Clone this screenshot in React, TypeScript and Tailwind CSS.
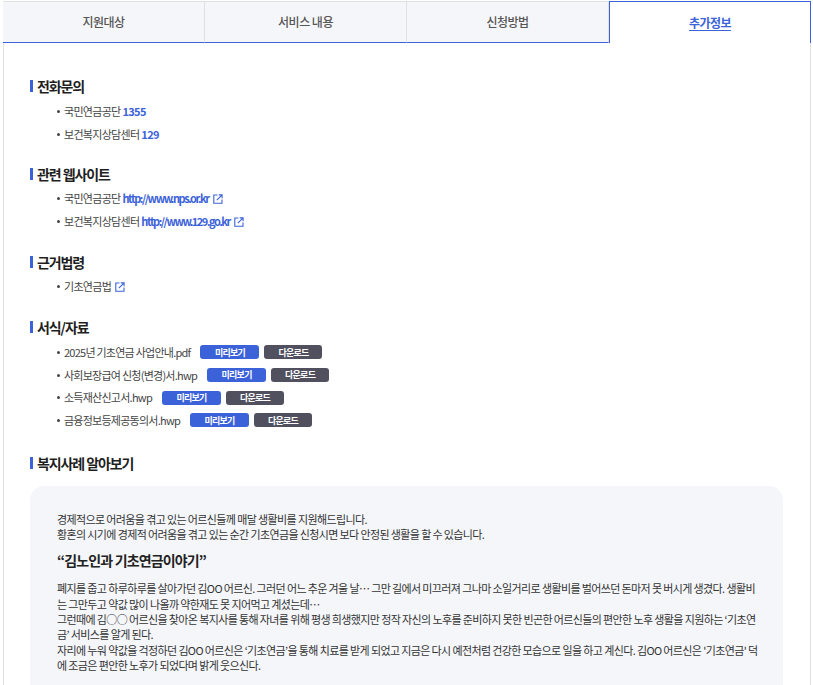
const fontStack = { fontFamily: '"Noto Sans CJK KR", "Noto Sans", sans-serif' };

const tabs = ["지원대상", "서비스 내용", "신청방법"];

const files = [
  "2025년 기초연금 사업안내.pdf",
  "사회보장급여 신청(변경)서.hwp",
  "소득재산신고서.hwp",
  "금융정보등제공동의서.hwp",
];

function Heading({ children }: { children: React.ReactNode }) {
  return (
    <h3 className="flex items-center h-[20px] text-[14px] font-bold leading-[20px] tracking-[-1.1px] text-[#1f1f1f]">
      <span className="w-[3px] h-[12px] bg-[#3b62d9] mr-[4px]" />
      {children}
    </h3>
  );
}

function Bullet({ children, className = "h-[23px] tracking-[-0.7px]" }: { children: React.ReactNode; className?: string }) {
  return (
    <li className={`flex items-center pl-[27px] text-[11px] text-[#444] ${className}`}>
      <span className="w-[3px] h-[3px] rounded-full bg-[#444] mr-[4px]" />
      {children}
    </li>
  );
}

function Blue({ children, narrow }: { children: React.ReactNode; narrow?: boolean }) {
  return (
    <span className={narrow ? "ml-[2px] font-bold tracking-[-1.45px] text-[#3b62d9]" : "ml-[2px] font-bold text-[#3b62d9]"}>
      {children}
    </span>
  );
}

function Ext() {
  return (
    <svg viewBox="0 0 10 10" className="ml-[4px] w-[10px] h-[10px] text-[#3b62d9]" fill="none" stroke="currentColor" strokeWidth="1.1">
      <path d="M4.5 1H.8v8.2H9V5.6" />
      <path d="M3.8 6.2 8.6 1.4M5.8 .9h3.3v3.3" />
    </svg>
  );
}

export default function App() {
  return (
    <div className="h-[685px] overflow-hidden bg-white pt-[1px] pl-[3px] pr-[2px]" style={fontStack}>
      {/* Tabs */}
      <div className="flex h-[42px]">
        {tabs.map((t) => (
          <div
            key={t}
            className="flex-1 flex items-center justify-center bg-[#f5f6fa] border-t border-r border-[#e0e0e0] border-b border-b-[#3b62d9] text-[12px] font-medium tracking-[-0.5px] text-[#555]"
          >
            {t}
          </div>
        ))}
        <div className="w-[202px] flex items-center justify-center bg-white border-t border-x border-[#3b62d9] text-[12px] font-bold tracking-[-0.6px] text-[#3b62d9] underline underline-offset-2">
          추가정보
        </div>
      </div>

      {/* Panel */}
      <div className="border-x border-[#e0e0e0] pl-[26px] pr-[27px] pt-[33px] pb-[40px]">
        <Heading>전화문의</Heading>
        <ul className="mt-[4px]">
          <Bullet>국민연금공단 <Blue>1355</Blue></Bullet>
          <Bullet>보건복지상담센터 <Blue>129</Blue></Bullet>
        </ul>

        <div className="mt-[18px]">
          <Heading>관련 웹사이트</Heading>
          <ul className="mt-[3px]">
            <Bullet>국민연금공단 <Blue narrow>http://www.nps.or.kr</Blue><Ext /></Bullet>
            <Bullet>보건복지상담센터 <Blue narrow>http://www.129.go.kr</Blue><Ext /></Bullet>
          </ul>
        </div>

        <div className="mt-[19px]">
          <Heading>근거법령</Heading>
          <ul className="mt-[3px]">
            <Bullet>기초연금법<Ext /></Bullet>
          </ul>
        </div>

        <div className="mt-[19px]">
          <Heading>서식/자료</Heading>
          <ul className="mt-[4px]">
            {files.map((f) => (
              <Bullet key={f} className="h-[22.7px] tracking-[-0.75px]">
                {f}
                <span className="ml-[10px] flex gap-[5px]">
                  <span className="flex items-center justify-center w-[59px] h-[14px] rounded-[3px] bg-[#3b62d9] text-[9px] font-bold text-white">미리보기</span>
                  <span className="flex items-center justify-center w-[58px] h-[14px] rounded-[3px] bg-[#50505f] text-[9px] font-bold text-white">다운로드</span>
                </span>
              </Bullet>
            ))}
          </ul>
        </div>

        <div className="mt-[21px]">
          <Heading>복지사례 알아보기</Heading>
        </div>

        <div className="mt-[13px] rounded-[14px] bg-[#f5f6fa] pl-[27px] pr-[24px] pt-[26px] pb-[40px] text-[11px] leading-[15.3px] tracking-[-0.62px] text-[#333] break-all">
          <p>경제적으로 어려움을 겪고 있는 어르신들께 매달 생활비를 지원해드립니다.</p>
          <p>황혼의 시기에 경제적 어려움을 겪고 있는 순간 기초연금을 신청시면 보다 안정된 생활을 할 수 있습니다.</p>
          <p className="mt-[8px] mb-[11px] text-[14px] leading-[20px] font-bold tracking-[-0.85px] text-[#222]">“김노인과 기초연금이야기”</p>
          <p>폐지를 줍고 하루하루를 살아가던 김OO 어르신. 그러던 어느 추운 겨울 날… 그만 길에서 미끄러져 그나마 소일거리로 생활비를 벌어쓰던 돈마저 못 버시게 생겼다. 생활비는 그만두고 약값 많이 나올까 약한재도 못 지어먹고 계셨는데…</p>
          <p>그런때에 김○○ 어르신을 찾아온 복지사를 통해 자녀를 위해 평생 희생했지만 정작 자신의 노후를 준비하지 못한 빈곤한 어르신들의 편안한 노후 생활을 지원하는 ‘기초연금’ 서비스를 알게 된다.</p>
          <p>자리에 누워 약값을 걱정하던 김OO 어르신은 ‘기초연금’을 통해 치료를 받게 되었고 지금은 다시 예전처럼 건강한 모습으로 일을 하고 계신다. 김OO 어르신은 '기초연금' 덕에 조금은 편안한 노후가 되었다며 밝게 웃으신다.</p>
        </div>
      </div>
    </div>
  );
}
